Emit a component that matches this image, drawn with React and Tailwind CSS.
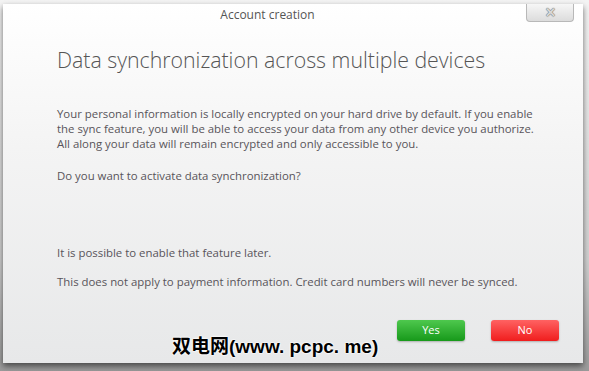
import React from "react";

export default function App() {
  return (
    <div className="w-[589px] h-[371px] overflow-hidden bg-[linear-gradient(to_bottom,#f4f4f4,#d0d0d0_70%,#9a9a9a)] pl-[3px] pt-[4px] font-['Open_Sans',sans-serif]">
      <div className="relative flex flex-col w-[580px] h-[359px] bg-[linear-gradient(to_bottom,#ffffff,#f4f4f4_40%,#e7e8e9)] shadow-[0_3px_6px_rgba(0,0,0,0.55)]">
        <div className="flex h-[22px] items-start">
          <div className="flex-1 text-center text-[12px] leading-[22px] text-[#555] pl-[6px]">Account creation</div>
          <div className="mr-[9px] w-[48px] h-[18px] rounded-b-[4px] border border-t-0 border-[#b8b8b8] bg-[linear-gradient(to_bottom,#f6f6f6,#dcdcdc)] flex items-center justify-center">
            <span className="text-[13px] leading-none text-[#d8d8d8] font-bold [text-shadow:0_0_1px_#666,0_0_1px_#666]">✕</span>
          </div>
        </div>
        <div className="pl-[54px] pr-[10px] text-[#58545a]">
          <h1 className="mt-[19px] text-[21.3px] font-light leading-[30px] text-[#555]">Data synchronization across multiple devices</h1>
          <p className="mt-[31px] text-[11.4px] leading-[15px] whitespace-nowrap">
            Your personal information is locally encrypted on your hard drive by default. If you enable<br />
            the sync feature, you will be able to access your data from any other device you authorize.<br />
            All along your data will remain encrypted and only accessible to you.
          </p>
          <p className="mt-[17px] text-[11.4px] leading-[15px]">Do you want to activate data synchronization?</p>
          <p className="mt-[62px] text-[11.4px] leading-[15px]">It is possible to enable that feature later.</p>
          <p className="mt-[14px] text-[11.4px] leading-[15px]">This does not apply to payment information. Credit card numbers will never be synced.</p>
        </div>
        <div className="flex justify-end gap-[26px] pr-[24px] mt-[31px]">
          <button className="w-[68px] h-[21px] rounded-[3px] bg-[linear-gradient(to_bottom,#4ec84e,#17991a)] text-white text-[11px] shadow-[0_1px_2px_rgba(0,0,0,0.25)]">Yes</button>
          <button className="w-[68px] h-[21px] rounded-[3px] bg-[linear-gradient(to_bottom,#ff6262,#f01d1d)] text-white text-[11px] shadow-[0_1px_2px_rgba(0,0,0,0.25)]">No</button>
        </div>
        <div className="absolute left-[169px] top-[329px] text-[19px] font-semibold text-black font-['Liberation_Sans','Noto_Sans_CJK_SC',sans-serif] [text-shadow:0_0_2px_#fff,0_0_2px_#fff,0_0_2px_#fff]">双电网(www. pcpc. me)</div>
      </div>
    </div>
  );
}
